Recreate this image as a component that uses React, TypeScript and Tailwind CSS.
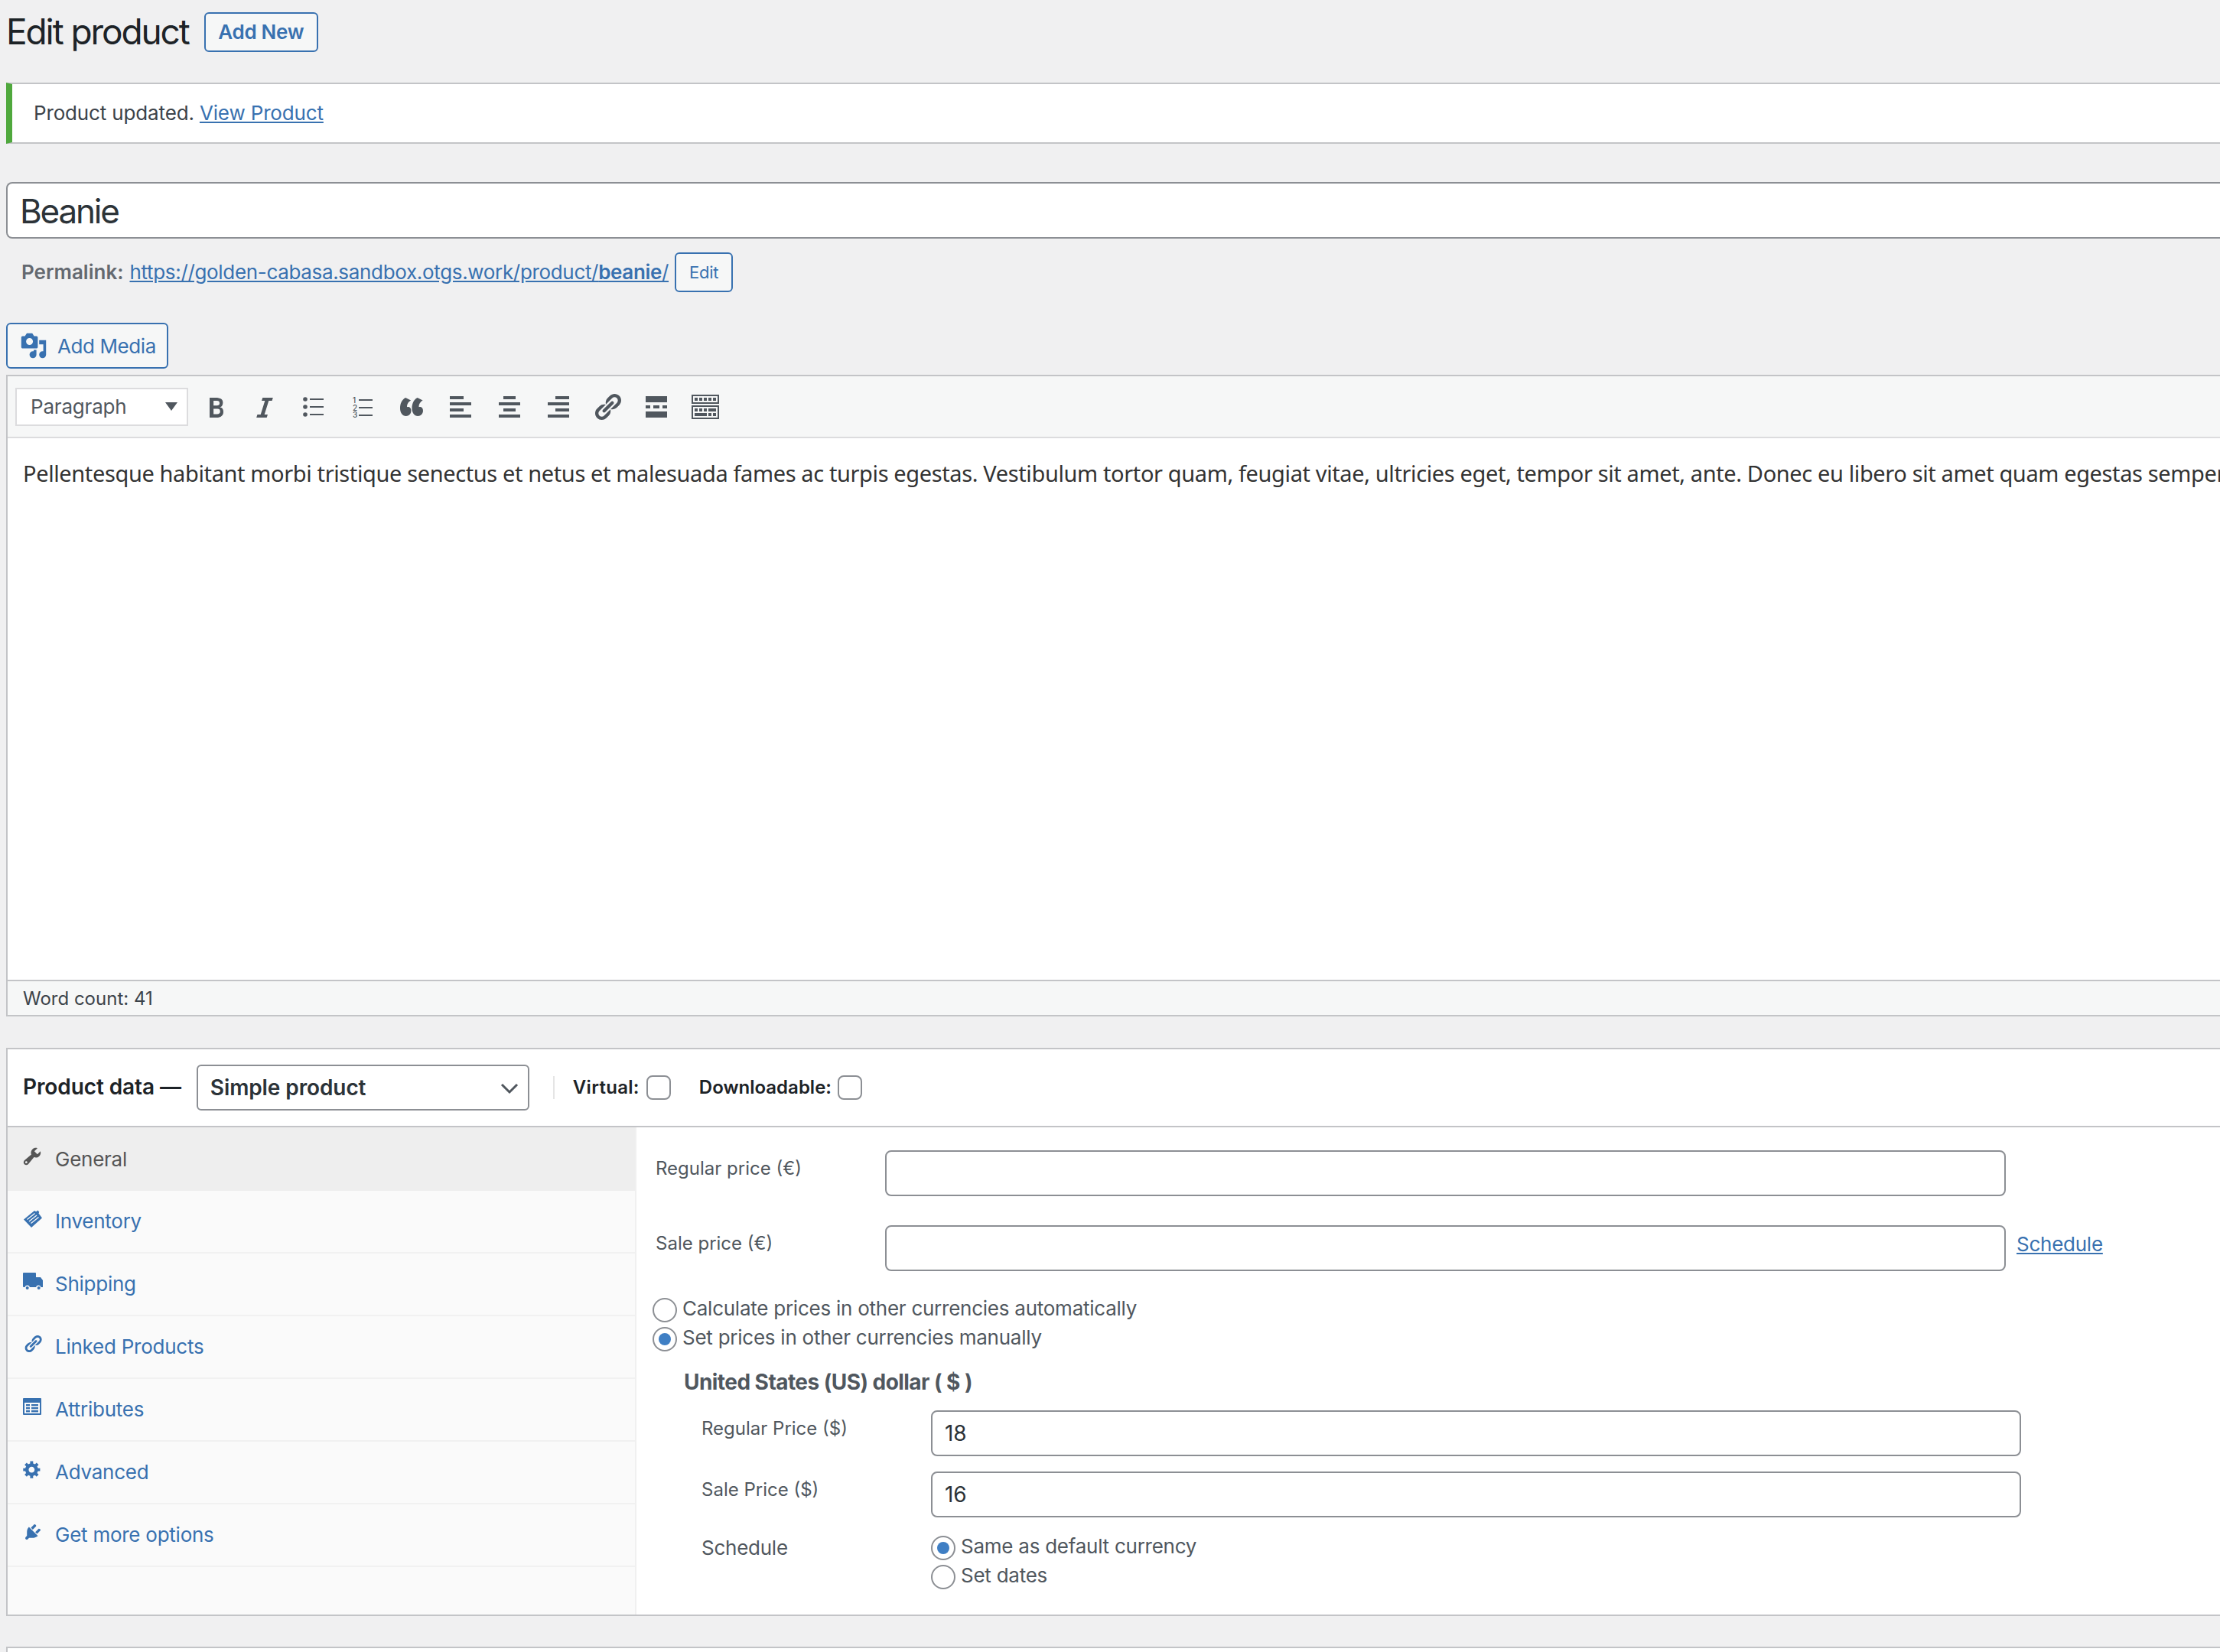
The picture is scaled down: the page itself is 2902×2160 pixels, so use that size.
import React from "react";

function Dash({ d, size, className }: { d: string; size: number; className?: string }) {
  return (
    <svg width={size} height={size} viewBox="0 0 20 20" fill="currentColor" className={className}>
      <path d={d} />
    </svg>
  );
}

const P = {
  bold: "M6 4v13h4.54c1.37 0 2.46-.33 3.26-1 .8-.66 1.2-1.58 1.2-2.77 0-.84-.17-1.51-.51-2.01s-.9-.85-1.67-1.03v-.09c.57-.1 1.02-.4 1.36-.9s.51-1.13.51-1.91c0-1.14-.39-1.98-1.17-2.5C12.75 4.26 11.5 4 9.78 4H6zm2.57 5.15V6.02h2.33c1.08 0 1.62.55 1.62 1.56 0 .55-.16.95-.48 1.2-.32.25-.72.37-1.21.37H8.57zm0 2.13h2.55c1.18 0 1.77.56 1.77 1.67 0 .62-.17 1.07-.52 1.35-.35.28-.83.42-1.44.42H8.57v-3.44z",
  italic: "M14.78 6h-2.13l-2.8 9h2.12l-.62 2H4.6l.62-2h2.14l2.8-9H8.03l.62-2h6.75z",
  link: "M17.74 2.76c1.68 1.69 1.68 4.41 0 6.1l-1.53 1.52c-1.12 1.12-2.7 1.47-4.14 1.09l2.62-2.61.76-.77.76-.76c.84-.84.84-2.2-.01-3.04-.84-.85-2.2-.85-3.04 0l-.77.76-3.38 3.38c-.37-1.44-.02-3.02 1.1-4.14l1.52-1.53c1.69-1.68 4.42-1.68 6.11 0zM8.59 13.43l5.34-5.34c.42-.42.42-1.1 0-1.52-.44-.43-1.13-.39-1.53 0l-5.33 5.34c-.42.42-.42 1.1 0 1.52.44.43 1.13.39 1.52 0zm-.76 2.29l4.14-4.15c.38 1.44.03 3.02-1.09 4.14l-1.52 1.53c-1.69 1.68-4.41 1.68-6.1 0-1.68-1.68-1.68-4.42 0-6.1l1.53-1.52c1.12-1.12 2.7-1.47 4.14-1.1l-4.14 4.15c-.85.84-.85 2.2 0 3.05.84.84 2.2.84 3.04 0z",
  media: "M13 11V4c0-.55-.45-1-1-1h-1.67L9 1H5L3.67 3H2c-.55 0-1 .45-1 1v7c0 .55.45 1 1 1h10c.55 0 1-.45 1-1zM7 4.5c1.38 0 2.5 1.12 2.5 2.5S8.38 9.5 7 9.5 4.5 8.38 4.5 7 5.62 4.5 7 4.5zM14 6h5v10.5c0 1.38-1.12 2.5-2.5 2.5S14 17.88 14 16.5s1.12-2.5 2.5-2.5c.17 0 .34.02.5.05V9h-3V6zm-4 8.05V13h2v3.5c0 1.38-1.12 2.5-2.5 2.5S7 17.88 7 16.5 8.12 14 9.5 14c.17 0 .34.02.5.05z",
  wrench: "M16.68 9.77c-1.34 1.34-3.3 1.67-4.95.99l-5.41 6.52c-.99.99-2.59.99-3.58 0s-.99-2.59 0-3.58l6.52-5.41c-.68-1.65-.35-3.61.99-4.95 1.28-1.28 3.12-1.62 4.72-1.06l-2.89 2.89 2.82 2.82 2.86-2.87c.53 1.58.18 3.39-1.08 4.65zM3.81 16.21c.4.39 1.04.39 1.43 0 .4-.4.4-1.04 0-1.43-.39-.4-1.03-.4-1.43 0-.39.39-.39 1.03 0 1.43z",
  gear: "M18 12h-2.18c-.17.7-.44 1.35-.81 1.93l1.54 1.54-2.1 2.1-1.54-1.54c-.58.36-1.23.63-1.91.79V19H8v-2.18c-.68-.16-1.33-.43-1.91-.79l-1.54 1.54-2.12-2.12 1.54-1.54c-.36-.58-.63-1.23-.79-1.91H1V9.03h2.17c.16-.7.44-1.35.8-1.94L2.43 5.55l2.1-2.1 1.54 1.54c.58-.37 1.24-.64 1.93-.81V2h3v2.18c.68.16 1.33.43 1.91.79l1.54-1.54 2.12 2.12-1.54 1.54c.36.59.64 1.24.8 1.94H18V12zm-8.5 1.5c1.66 0 3-1.34 3-3s-1.34-3-3-3-3 1.34-3 3 1.34 3 3 3z",
  plug: "M13.11 4.36L9.87 7.6 8 5.73l3.24-3.24c.35-.34 1.05-.2 1.56.32.52.51.66 1.21.31 1.55zm-8 1.77l.91-1.12 9.01 9.01-1.19.84c-.71.71-2.63 1.16-3.82 1.16H6.14L4.9 17.26c-.59.59-1.54.59-2.12 0-.59-.58-.59-1.53 0-2.12l1.24-1.24v-3.88c0-1.13.4-3.19 1.09-3.89zm7.26 3.97l3.24-3.24c.34-.35 1.04-.21 1.55.31.52.51.66 1.21.31 1.55l-3.24 3.25z",
  quote: "M9.49 13.22c0-.74-.2-1.38-.61-1.9-.62-.78-1.83-.88-2.53-.72-.29-1.65 1.11-3.75 2.92-4.65L5.21 4C2.2 5.3.99 8.57 1 11.47c.01 2.99 1.71 5.53 4.58 5.53 2.23 0 3.91-1.71 3.91-3.78z",
};

function TB({ children }: { children: React.ReactNode }) {
  return <div className="w-[64px] h-[40px] flex items-center justify-center shrink-0 text-[#50575e]">{children}</div>;
}

function Bars({ type }: { type: "l" | "c" | "r" }) {
  const x = type === "l" ? 0 : type === "c" ? 6 : 10;
  return (
    <svg width="28" height="28" viewBox="0 0 28 28" fill="currentColor">
      <rect x={x} y="0" width={type === "c" ? 16 : 18} height="4" />
      <rect x="0" y="8" width="28" height="4" />
      <rect x={x} y="16" width={type === "c" ? 16 : 18} height="4" />
      <rect x="0" y="24" width="28" height="4" />
    </svg>
  );
}

function Toolbar() {
  return (
    <div className="flex items-center h-[81px] bg-[#f6f7f7] border-b-2 border-[#dcdcde] pl-[10px]">
      <div className="flex items-center justify-between w-[226px] h-[50px] bg-white border-2 border-[#dcdcde] pl-[18px] pr-[12px] text-[26px] tracking-normal text-[#50575e] mr-[4px] shrink-0">
        <span className="tracking-[-0.2px]">Paragraph</span>
        <svg width="16" height="11" viewBox="0 0 16 11" fill="currentColor"><path d="M0 0h16L8 11z" /></svg>
      </div>
      <TB><Dash d={P.bold} size={40} /></TB>
      <TB><Dash d={P.italic} size={40} /></TB>
      <TB>
        <svg width="28" height="26" viewBox="0 0 28 26" fill="currentColor">
          <circle cx="3" cy="3" r="2.8" /><circle cx="3" cy="13" r="2.8" /><circle cx="3" cy="23" r="2.8" />
          <rect x="9" y="2" width="18" height="2" /><rect x="9" y="12" width="18" height="2" /><rect x="9" y="22" width="18" height="2" />
        </svg>
      </TB>
      <TB>
        <svg width="28" height="30" viewBox="0 0 28 30" fill="currentColor" fontFamily="Inter, sans-serif" fontSize="10" fontWeight="500" letterSpacing="0">
          <text x="1" y="10">1</text><text x="1" y="19.5">2</text><text x="1" y="29">3</text>
          <rect x="9" y="5" width="18" height="2" /><rect x="9" y="15" width="18" height="2" /><rect x="9" y="25" width="18" height="2" />
        </svg>
      </TB>
      <TB>
        <svg width="30" height="24" viewBox="1 4 17.6 13" preserveAspectRatio="none" fill="currentColor">
          <path d={P.quote} /><path d={P.quote} transform="translate(9.1 0)" />
        </svg>
      </TB>
      <TB><Bars type="l" /></TB>
      <TB><Bars type="c" /></TB>
      <TB><Bars type="r" /></TB>
      <TB><Dash d={P.link} size={40} /></TB>
      <TB>
        <svg width="28" height="28" viewBox="0 0 28 28" fill="currentColor">
          <rect x="0" y="0" width="28" height="8" />
          <rect x="0" y="12" width="6" height="4" /><rect x="10" y="12" width="8" height="4" /><rect x="22" y="12" width="6" height="4" />
          <rect x="0" y="20" width="28" height="8" />
        </svg>
      </TB>
      <TB>
        <svg width="36" height="32" viewBox="0 0 36 32" fill="currentColor">
          <path fillRule="evenodd" d="M0 0h36v12H0zM2 2v8h32V2z" />
          <rect x="4" y="4" width="4" height="4" /><rect x="10" y="4" width="4" height="4" /><rect x="16" y="4" width="4" height="4" /><rect x="22" y="4" width="4" height="4" /><rect x="28" y="4" width="4" height="4" />
          <path fillRule="evenodd" d="M0 14h36v18H0zM2 16v14h32V16z" />
          <rect x="4" y="18" width="4" height="4" /><rect x="10" y="18" width="4" height="4" /><rect x="16" y="18" width="4" height="4" /><rect x="22" y="18" width="10" height="4" />
          <rect x="4" y="24" width="16" height="4" /><rect x="22" y="24" width="4" height="4" /><rect x="28" y="24" width="4" height="4" />
        </svg>
      </TB>
    </div>
  );
}

function Tab({ icon, label, active }: { icon: React.ReactNode; label: string; active?: boolean }) {
  return (
    <div
      className={
        active
          ? "flex items-center h-[83px] bg-[#eeeeee] text-[#555555] text-[26px] pl-[20px]"
          : "flex items-center h-[82px] border-b-2 border-[#f1f1f1] text-[#3871b0] text-[26px] pl-[20px]"
      }
    >
      <div className="w-[42px] h-[30px] mb-[8px] flex items-center shrink-0">{icon}</div>
      <span>{label}</span>
    </div>
  );
}

function Radio({ checked, label }: { checked?: boolean; label: string }) {
  return (
    <div className="flex items-center h-[32px] gap-[7px] text-[26px] text-[#50575e]">
      <div className="w-[32px] h-[32px] rounded-full bg-white border-2 border-[#8c8f94] flex items-center justify-center shrink-0">
        {checked && <div className="w-[16px] h-[16px] rounded-full bg-[#3f7fc4]" />}
      </div>
      <span className="mb-[4px]">{label}</span>
    </div>
  );
}

function Input({ w, value }: { w: string; value?: string }) {
  return (
    <div className={`${w} h-[60px] bg-white border-2 border-[#8c8f94] rounded-[8px] flex items-center pl-[16px] text-[28px] text-[#2c3338] shrink-0`}>
      {value}
    </div>
  );
}

export default function App() {
  return (
    <div className="w-[2902px] h-[2160px] overflow-hidden bg-[#f0f0f1] pl-2 font-['Inter',sans-serif] text-[26px] text-[#3c434a] leading-[32px] tracking-[-0.25px]">
      <div className="flex items-center pt-4 h-[68px]">
        <h1 className="text-[46px] leading-[52px] font-normal text-[#1d2327] tracking-[-2.1px] pb-[2px]">Edit product</h1>
        <div className="ml-[20px] h-[52px] w-[149px] flex items-center justify-center border-2 border-[#3871b0] rounded-[6px] bg-[#f6f7f7] text-[#3871b0] font-semibold text-[26px] tracking-[-0.3px]">Add New</div>
      </div>

      <div className="mt-10 h-[80px] bg-white border-y-2 border-[#c3c4c7] border-l-8 border-l-[#4fa83d] flex items-center pl-[28px] tracking-[-0.15px] text-[#3c434a]">
        <span>Product updated.&nbsp;</span>
        <span className="text-[#3871b0] underline">View Product</span>
      </div>

      <div className="mt-[50px] h-[74px] bg-white border-2 border-r-0 border-[#8c8f94] rounded-l-[8px] flex items-center pl-[16px] pt-[2px] text-[44px] text-[#2c3338] tracking-[-2.2px]">Beanie</div>

      <div className="mt-[18px] h-[52px] flex items-center pl-[20px]">
        <span className="font-semibold text-[#646970] tracking-normal">Permalink:</span>
        <span className="ml-[8px] text-[#3871b0] underline tracking-[-0.33px]">https://golden-cabasa.sandbox.otgs.work/product/<b className="font-semibold">beanie</b>/</span>
        <div className="ml-[8px] w-[76px] h-[52px] flex items-center justify-center border-2 border-[#3871b0] rounded-[6px] bg-[#f6f7f7] text-[#3871b0] text-[22px]">Edit</div>
      </div>

      <div className="mt-10 w-[212px] h-[60px] flex items-center border-2 border-[#3871b0] rounded-[6px] bg-[#f6f7f7] text-[#3871b0] pl-[16px]">
        <Dash d={P.media} size={36} className="shrink-0" />
        <span className="ml-[13px] text-[26px] pt-[1px] tracking-[-0.4px]">Add Media</span>
      </div>

      <div className="mt-2 border-y-2 border-l-2 border-[#c3c4c7] h-[839px] flex flex-col">
        <Toolbar />
        <div className="flex-1 bg-white px-[20px] pt-[28px] whitespace-nowrap font-['Noto_Sans',sans-serif] text-[29px] leading-[36px] tracking-[-0.38px] text-[#333333]">
          Pellentesque habitant morbi tristique senectus et netus et malesuada fames ac turpis egestas. Vestibulum tortor quam, feugiat vitae, ultricies eget, tempor sit amet, ante. Donec eu libero sit amet quam egestas semper
        </div>
        <div className="h-[46px] bg-[#f6f7f7] border-t-2 border-[#c3c4c7] flex items-center pl-[20px] pt-[1px] text-[24px] tracking-normal text-[#3c434a]">Word count: 41</div>
      </div>

      <div className="mt-[41px] border-y-2 border-l-2 border-[#c3c4c7] bg-white h-[743px] flex flex-col">
        <div className="h-[102px] border-b-2 border-[#c3c4c7] flex items-center pl-[20px] shrink-0">
          <span className="font-semibold text-[28px] tracking-[-0.1px] text-[#1d2327] mb-[2px]">Product data —</span>
          <div className="ml-[20px] w-[435px] h-[60px] border-2 border-[#8c8f94] rounded-[6px] flex items-center justify-between pl-[16px] pr-[12px] text-[28px] tracking-[-0.1px] font-semibold text-[#2c3338]">
            <span>Simple product</span>
            <svg width="24" height="24" viewBox="0 0 24 24" fill="none" stroke="#50575e" strokeWidth="3"><path d="M2 8l10 10L22 8" /></svg>
          </div>
          <div className="ml-[31px] w-[2px] h-[30px] bg-[#e5e5e5]" />
          <span className="ml-[24px] font-semibold text-[24px] tracking-[0.3px] text-[#1d2327]">Virtual:</span>
          <div className="ml-[9px] w-[32px] h-[32px] rounded-[8px] border-2 border-[#8c8f94] bg-white" />
          <span className="ml-[37px] font-semibold text-[24px] tracking-normal text-[#1d2327]">Downloadable:</span>
          <div className="ml-[8px] w-[32px] h-[32px] rounded-[8px] border-2 border-[#8c8f94] bg-white" />
        </div>
        <div className="flex flex-1 min-h-0">
          <div className="w-[822px] bg-[#fafafa] border-r-2 border-[#f0f0f0] shrink-0">
            <Tab active label="General" icon={<Dash d={P.wrench} size={28} className="-ml-[2px]" />} />
            <Tab label="Inventory" icon={
              <svg width="26" height="25" viewBox="0 0 26 25" fill="currentColor">
                <path d="M1 13.5L15 2l2.2 1.2L19.5 1.5l1.8 2.2-.8 1.8 4.5 6L11 24z" />
                <g stroke="#fafafa" strokeWidth="1.3">
                  <path d="M5.5 13.5L15.5 5.5M8 16L18 8M10.5 18.5L20.5 10.5" />
                </g>
              </svg>
            } />
            <Tab label="Shipping" icon={
              <svg width="26" height="22" viewBox="0 0 26 22" fill="currentColor">
                <path d="M0 1a1 1 0 0 1 1-1h15a1 1 0 0 1 1 1v5h6l3 4v9h-2.5a3.4 3.4 0 0 0-6.5 0H9a3.4 3.4 0 0 0-6.5 0H1a1 1 0 0 1-1-1z" />
                <circle cx="5.7" cy="20" r="2" /><circle cx="20.7" cy="20" r="2" />
              </svg>
            } />
            <Tab label="Linked Products" icon={<Dash d={P.link} size={26} />} />
            <Tab label="Attributes" icon={
              <svg width="24" height="22" viewBox="0 0 24 22" fill="currentColor">
                <path fillRule="evenodd" d="M1 0h22a1 1 0 0 1 1 1v20a1 1 0 0 1-1 1H1a1 1 0 0 1-1-1V1a1 1 0 0 1 1-1zM2 6v14h20V6z" />
                <rect x="4" y="8" width="5" height="2.4" /><rect x="11" y="8" width="9" height="2.4" />
                <rect x="4" y="12" width="5" height="2.4" /><rect x="11" y="12" width="9" height="2.4" />
                <rect x="4" y="16" width="5" height="2.4" /><rect x="11" y="16" width="9" height="2.4" />
              </svg>
            } />
            <Tab label="Advanced" icon={<Dash d={P.gear} size={26} className="-ml-[1px]" />} />
            <Tab label="Get more options" icon={<Dash d={P.plug} size={26} />} />
          </div>
          <div className="flex-1 pt-[30px] min-w-0">
            <div className="flex items-start">
              <div className="w-[325px] pl-[25px] pt-[8px] text-[24px] tracking-normal text-[#50575e] shrink-0">Regular price (€)</div>
              <Input w="w-[1465px]" />
            </div>
            <div className="flex items-start mt-[38px]">
              <div className="w-[325px] pl-[25px] pt-[8px] text-[24px] tracking-normal text-[#50575e] shrink-0">Sale price (€)</div>
              <Input w="w-[1465px]" />
              <span className="ml-[14px] mt-[9px] text-[#3871b0] underline">Schedule</span>
            </div>
            <div className="pl-[21px] mt-[35px] flex flex-col gap-[6px]">
              <Radio label="Calculate prices in other currencies automatically" />
              <Radio checked label="Set prices in other currencies manually" />
            </div>
            <div className="pl-[62px] mt-[24px] font-bold tracking-[-0.55px] text-[#50575e] text-[28px]">United States (US) dollar ( $ )</div>
            <div className="flex items-start mt-[21px]">
              <div className="w-[385px] pl-[85px] pt-[8px] text-[24px] tracking-normal text-[#50575e] shrink-0">Regular Price ($)</div>
              <Input w="w-[1425px]" value="18" />
            </div>
            <div className="flex items-start mt-[20px]">
              <div className="w-[385px] pl-[85px] pt-[8px] text-[24px] tracking-normal text-[#50575e] shrink-0">Sale Price ($)</div>
              <Input w="w-[1425px]" value="16" />
            </div>
            <div className="flex items-start mt-[24px]">
              <div className="w-[385px] pl-[85px] text-[26px] text-[#50575e] shrink-0">Schedule</div>
              <div className="flex flex-col gap-[6px]">
                <Radio checked label="Same as default currency" />
                <Radio label="Set dates" />
              </div>
            </div>
          </div>
        </div>
      </div>

      <div className="mt-10 h-[40px] bg-white border-t-2 border-l-2 border-[#c3c4c7]" />
    </div>
  );
}
